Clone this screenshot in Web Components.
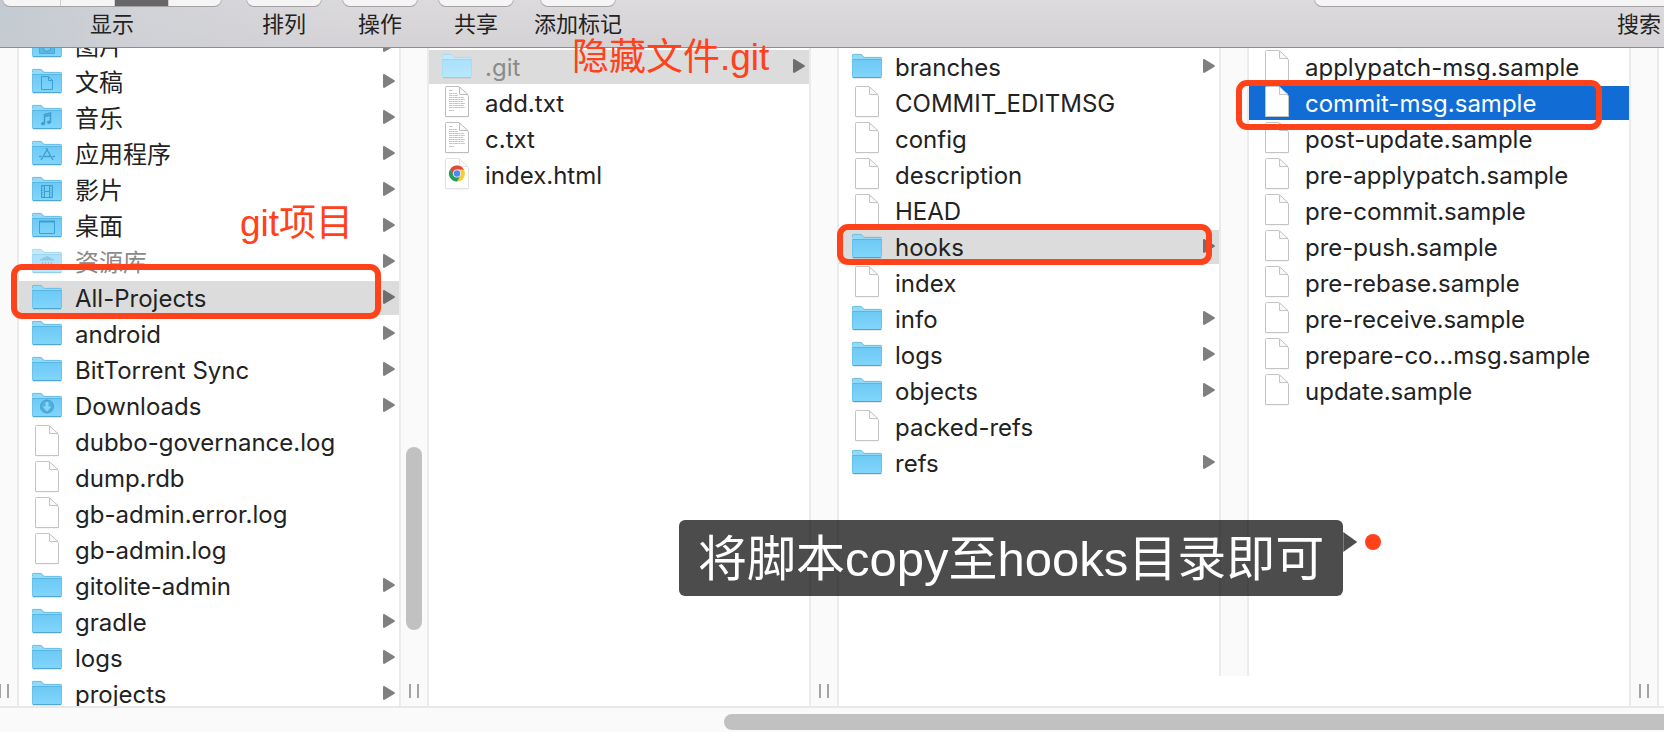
<!DOCTYPE html>
<html lang="zh-CN">
<head>
<meta charset="utf-8">
<title>Finder</title>
<style>
  body {
    margin: 0;
    height: 100vh;
    overflow: hidden;
    background: #fff;
    color: #222;
    font-family: Inter, "Noto Sans CJK SC", sans-serif;
  }
</style>
</head>
<body>
<finder-window>
  <tool-group slot="tools" label="显示" segments="4" active="3"></tool-group>
  <tool-group slot="tools" label="排列" segments="1"></tool-group>
  <tool-group slot="tools" label="操作" segments="1"></tool-group>
  <tool-group slot="tools" label="共享" segments="1"></tool-group>
  <tool-group slot="tools" label="添加标记" segments="1"></tool-group>
  <search-field slot="search" label="搜索"></search-field>

  <column-divider first grip></column-divider>
  <finder-column scrolled>
    <finder-row icon="pictures" folder>图片</finder-row>
    <finder-row icon="documents" folder>文稿</finder-row>
    <finder-row icon="music" folder>音乐</finder-row>
    <finder-row icon="apps" folder>应用程序</finder-row>
    <finder-row icon="movies" folder>影片</finder-row>
    <finder-row icon="desktop" folder>桌面</finder-row>
    <finder-row icon="library" folder dimmed>资源库</finder-row>
    <finder-row icon="folder" folder open>All-Projects</finder-row>
    <finder-row icon="folder" folder>android</finder-row>
    <finder-row icon="folder" folder>BitTorrent Sync</finder-row>
    <finder-row icon="downloads" folder>Downloads</finder-row>
    <finder-row icon="file">dubbo-governance.log</finder-row>
    <finder-row icon="file">dump.rdb</finder-row>
    <finder-row icon="file">gb-admin.error.log</finder-row>
    <finder-row icon="file">gb-admin.log</finder-row>
    <finder-row icon="folder" folder>gitolite-admin</finder-row>
    <finder-row icon="folder" folder>gradle</finder-row>
    <finder-row icon="folder" folder>logs</finder-row>
    <finder-row icon="folder" folder>projects</finder-row>
  </finder-column>
  <column-divider grip thumb></column-divider>
  <finder-column>
    <finder-row icon="folder" folder open dimmed>.git</finder-row>
    <finder-row icon="text">add.txt</finder-row>
    <finder-row icon="text">c.txt</finder-row>
    <finder-row icon="chrome">index.html</finder-row>
  </finder-column>
  <column-divider grip></column-divider>
  <finder-column>
    <finder-row icon="folder" folder>branches</finder-row>
    <finder-row icon="file">COMMIT_EDITMSG</finder-row>
    <finder-row icon="file">config</finder-row>
    <finder-row icon="file">description</finder-row>
    <finder-row icon="file">HEAD</finder-row>
    <finder-row icon="folder" folder open>hooks</finder-row>
    <finder-row icon="file">index</finder-row>
    <finder-row icon="folder" folder>info</finder-row>
    <finder-row icon="folder" folder>logs</finder-row>
    <finder-row icon="folder" folder>objects</finder-row>
    <finder-row icon="file">packed-refs</finder-row>
    <finder-row icon="folder" folder>refs</finder-row>
  </finder-column>
  <column-divider short></column-divider>
  <finder-column>
    <finder-row icon="file">applypatch-msg.sample</finder-row>
    <finder-row icon="file" selected>commit-msg.sample</finder-row>
    <finder-row icon="file">post-update.sample</finder-row>
    <finder-row icon="file">pre-applypatch.sample</finder-row>
    <finder-row icon="file">pre-commit.sample</finder-row>
    <finder-row icon="file">pre-push.sample</finder-row>
    <finder-row icon="file">pre-rebase.sample</finder-row>
    <finder-row icon="file">pre-receive.sample</finder-row>
    <finder-row icon="file">prepare-co…msg.sample</finder-row>
    <finder-row icon="file">update.sample</finder-row>
  </finder-column>
  <column-divider grip></column-divider>

  <mark-box slot="marks" style="left: 11px; top: 264px; width: 370px; height: 55px"></mark-box>
  <mark-box slot="marks" style="left: 837px; top: 224px; width: 375px; height: 41px"></mark-box>
  <mark-box slot="marks" style="left: 1236px; top: 80px; width: 366px; height: 50px"></mark-box>
  <mark-text slot="marks" style="left: 572px; top: 36px">隐藏文件.git</mark-text>
  <mark-text slot="marks" style="left: 240px; top: 202px">git项目</mark-text>
  <mark-callout slot="marks" style="left: 679px; top: 520px">将脚本copy至hooks目录即可</mark-callout>
</finder-window>

<script>
const template = (strings, ...values) => {
  const el = document.createElement('template')
  el.innerHTML = String.raw(strings, ...values)
  return el
}

class Base extends HTMLElement {
  constructor() {
    super()
    this.attachShadow({ mode: 'open' }).appendChild(
      this.constructor.template.content.cloneNode(true),
    )
  }

  $(selector) {
    return this.shadowRoot.querySelector(selector)
  }
}

class FinderWindow extends Base {
  static template = template`
    <header>
      <div class="tools"><slot name="tools"></slot></div>
      <slot name="search"></slot>
    </header>
    <main><slot></slot></main>
    <footer><div class="thumb"></div></footer>
    <slot name="marks"></slot>
    <style>
      :host {
        display: flex;
        flex-direction: column;
        height: 100%;
        position: relative;
        overflow: hidden;
      }
      header {
        flex: none;
        box-sizing: border-box;
        height: 48px;
        display: flex;
        align-items: flex-end;
        justify-content: space-between;
        padding: 0 0 10px 2px;
        overflow: hidden;
        border-bottom: 1px solid #8f8d90;
        background:
          linear-gradient(100deg, #c3cad1 0, rgba(205, 208, 213, 0.7) 140px, rgba(216, 214, 217, 0) 360px),
          linear-gradient(#dcdadd, #d4d2d5);
      }
      .tools {
        display: flex;
        align-items: flex-end;
        gap: 20px;
      }
      main {
        flex: 1;
        min-height: 0;
        display: flex;
        margin-left: -11px;
        margin-right: 5px;
      }
      footer {
        flex: none;
        box-sizing: border-box;
        height: 26px;
        padding-top: 6px;
        display: flex;
        justify-content: flex-end;
        border-top: 2px solid #e8e8e8;
        background: #fafafa;
      }
      .thumb {
        width: 940px;
        height: 16px;
        border-radius: 8px 0 0 8px;
        background: #c1c1c1;
      }
    </style>`
}

class ToolGroup extends Base {
  static template = template`
    <div class="buttons"></div>
    <span class="label" id="label"></span>
    <style>
      :host {
        display: flex;
        flex-direction: column;
        align-items: center;
        gap: 4px;
      }
      :host([segments="4"]) { margin-right: 4px; }
      .buttons {
        display: flex;
        box-sizing: border-box;
        height: 44px;
        border-radius: 8px;
        overflow: hidden;
        border: 1px solid #b9b7ba;
        border-bottom-color: #a3a1a4;
        background: #f5f5f5;
      }
      button {
        width: 54px;
        padding: 0;
        border: 0;
        border-right: 1px solid #cfcfcf;
        background: none;
      }
      button.active { background: #676767; }
      button:first-child { width: 58px; }
      button:last-child { border-right: 0; width: 52px; }
      button:only-child { width: 74px; }
      .label {
        font-size: 22px;
        line-height: 26px;
      }
    </style>`

  connectedCallback() {
    const label = this.getAttribute('label')
    const active = Number(this.getAttribute('active'))
    this.$('.label').textContent = label
    for (let i = 1; i <= Number(this.getAttribute('segments')); i++) {
      const button = document.createElement('button')
      button.setAttribute('aria-labelledby', 'label')
      button.classList.toggle('active', i === active)
      this.$('.buttons').append(button)
    }
  }
}

class SearchField extends Base {
  static template = template`
    <input id="search" type="search">
    <label for="search"></label>
    <style>
      :host {
        display: flex;
        flex-direction: column;
        align-items: flex-end;
        gap: 4px;
      }
      input {
        box-sizing: border-box;
        width: 350px;
        height: 44px;
        border: 1px solid #b9b7ba;
        border-bottom-color: #a3a1a4;
        border-right: 0;
        border-radius: 8px 0 0 8px;
        background: #f5f5f5;
        outline: none;
      }
      label {
        padding-right: 3px;
        font-size: 22px;
        line-height: 26px;
      }
    </style>`

  connectedCallback() {
    this.$('label').textContent = this.getAttribute('label')
  }
}

class ColumnDivider extends Base {
  static template = template`
    <div class="thumb"></div>
    <div class="grip"></div>
    <style>
      :host {
        flex: none;
        box-sizing: border-box;
        width: 30px;
        padding: 0 8px 8px;
        display: flex;
        flex-direction: column;
        justify-content: flex-end;
        border: solid #ebebeb;
        border-width: 0 2px;
        background: #fafafa;
      }
      :host([short]) { margin-bottom: 30px; }
      .thumb {
        display: none;
        width: 16px;
        height: 183px;
        margin: 0 -2px 54px;
        border-radius: 8px;
        background: #c1c1c1;
        align-self: center;
      }
      :host([thumb]) .thumb { display: block; }
      .grip {
        display: none;
        box-sizing: border-box;
        width: 10px;
        height: 14px;
        border: solid #a3a3a3;
        border-width: 0 2px;
      }
      :host([grip]) .grip { display: block; }
    </style>`
}

class FinderColumn extends Base {
  static template = template`
    <div class="list" role="list"><slot></slot></div>
    <style>
      :host {
        flex: 1 1 0;
        min-width: 0;
        overflow: hidden;
        background: #fff;
      }
      .list {
        display: flex;
        flex-direction: column;
        gap: 2px;
        padding-top: 2px;
      }
      :host([scrolled]) .list { margin-top: -21px; }
    </style>`
}

class FinderRow extends Base {
  static template = template`
    <button>
      <file-icon></file-icon>
      <span><slot></slot></span>
      <svg class="arrow" width="12" height="14" viewBox="0 0 12 14"><path d="M0 1.2C0 .2.8-.2 1.6.2L11.5 6.2Q12.4 7 11.5 7.8L1.6 13.8C.8 14.2 0 13.8 0 12.8z"/></svg>
    </button>
    <style>
      :host { display: block; }
      button {
        box-sizing: border-box;
        width: 100%;
        height: 34px;
        padding: 0 4px 0 13px;
        display: flex;
        gap: 13px;
        border: 0;
        background: none;
        color: inherit;
        font: inherit;
        font-size: 24px;
        line-height: 36px;
        text-align: left;
      }
      span {
        flex: 1;
        min-width: 0;
        white-space: nowrap;
      }
      .arrow {
        display: none;
        flex: none;
        margin-top: 9px;
        fill: #7f7f7f;
      }
      :host([folder]) .arrow { display: block; }
      :host([open]) button { background: #dcdcdc; }
      :host([open]) .arrow { fill: #6e6e6e; }
      :host([selected]) button { background: #116cd6; color: #fff; }
      :host([dimmed]) span { color: #8a8a8a; }
      /* keeps hidden folders pale on the grey highlight too */
      :host([dimmed]) file-icon { filter: contrast(0.4) brightness(1.43); }
    </style>`

  connectedCallback() {
    this.setAttribute('role', 'listitem')
    this.$('file-icon').setAttribute('kind', this.getAttribute('icon'))
  }
}

const folder = (glyph = '') => `
  <path fill="#000" opacity=".12" d="M1 27h28v1.8H1z"/>
  <path fill="#93daf9" d="M0 5.5Q0 4 1.5 4h7q1 0 1.8 1l1 1.2q.6.8 1.6.8h15.6Q30 7 30 8.5V12H0z"/>
  <path fill="none" stroke="#62b5dc" stroke-width=".8" d="M.4 7V5.4q0-1 1-1h7q.9 0 1.6.9l1 1.2q.7.9 1.8.9h15.7q1 0 1 1"/>
  <path fill="url(#f)" d="M0 9h30v17.5q0 1.5-1.5 1.5h-27Q0 28 0 26.5z"/>
  <path stroke="#58b6e4" d="M0 9.5h30"/>
  <path stroke="#4ca5d2" d="M1 27.5h28"/>
  <path stroke="#67bde6" stroke-width=".8" d="M.4 9v17.5M29.6 9v17.5"/>
  <g fill="none" stroke="#3d9fd0" stroke-width="1">${glyph}</g>`

const page = (body = '', stroke = '#c4c4c4') => `
  <path fill="#000" opacity=".18" d="M4 30.2h22v1H4z"/>
  <path fill="#fff" stroke="${stroke}" d="M4.500 .5H17l9.500 9.500V30.500h-23V1.500q0-1 1-1z"/>
  <path fill="#fafafa" stroke="${stroke}" d="M17.500 1v7.500h8.500z"/>${body}`

const textLines = [4, 7, 9, 11, 13, 15, 17, 19, 21, 24]
  .map((y, i) => `<path stroke="#bcbcbc" stroke-width=".9" stroke-dasharray="3 .5 2 .4" d="M7 ${y + 0.5}h${[4, 8, 9, 15, 16, 14, 16, 15, 16, 5][i]}"/>`)
  .join('')

const icons = {
  folder: folder(),
  pictures: folder('<path fill="#5bb9e6" stroke="#4aaad9" d="M7.500 13.500H11l1.500-2h5l1.500 2h3.500v11h-15z"/><circle cx="15" cy="18.500" r="4" fill="#74cbf3"/>'),
  documents: folder('<path d="M9.500 11.500h7l4 4v9h-11zM16.500 11.500v4h4"/>'),
  music: folder('<path stroke-width="1.500" d="M12.500 22.500v-9l6-1.500v9M12.500 15.500l6-1.500"/><g fill="#3d9fd0"><ellipse cx="11" cy="22.700" rx="1.600" ry="1.200"/><ellipse cx="17" cy="21.200" rx="1.600" ry="1.200"/></g>'),
  apps: folder('<path stroke-width="1.400" d="M14 11l7 12M15.800 11.500L9 23M7 19.500h2.500M12 19.500h6M20.500 19.500H23"/>'),
  movies: folder('<path d="M9.500 12.500h11v12h-11zM12.500 12.500v12M17.500 12.500v12M12.500 18.500h5"/><path stroke-dasharray="1 1" d="M11 13v11M19 13v11"/>'),
  desktop: folder('<path d="M7.500 12.500h15v12h-15z"/><path stroke-width="2" d="M7 12.500h16"/>'),
  library: folder('<path fill="#3d9fd0" stroke="none" d="M15 11l7 3.500v1H8v-1z"/><path stroke-width="1.500" d="M10.500 17v6M13.500 17v6M16.500 17v6M19.500 17v6M8 24h14"/>'),
  downloads: folder('<circle cx="15" cy="17.500" r="6.500" fill="#4fafde"/><path fill="#8bd6f8" stroke="none" d="M13.500 13h3v4.500h3L15 22.500l-4.500-5h3z"/>'),
  file: page(),
  text: page(textLines, '#bdbdbd'),
  chrome: page(`
    <circle cx="15" cy="15.500" r="8" fill="#fbc934"/>
    <path fill="#dd4b3e" d="M8.070 11.500A8 8 0 0 1 21.930 11.500H15L11.540 17.500z"/>
    <path fill="#1ba15f" d="M8.070 11.500A8 8 0 0 0 15 23.500L18.460 17.500H11.540z"/>
    <circle cx="15" cy="15.500" r="4" fill="#f4f4f4"/>
    <circle cx="15" cy="15.500" r="3.200" fill="#4a8af4"/>`, '#e2e2e2'),
}

class FileIcon extends Base {
  static template = template`
    <svg width="30" height="32" viewBox="0 0 30 32" aria-hidden="true">
      <defs>
        <linearGradient id="f" x1="0" y1="0" x2="0" y2="1">
          <stop offset="0" stop-color="#6cc9f5"/>
          <stop offset="1" stop-color="#82d6fb"/>
        </linearGradient>
      </defs>
      <g></g>
    </svg>
    <style>
      :host { display: block; flex: none; width: 30px; height: 32px; }
      svg { display: block; }
    </style>`

  static observedAttributes = ['kind']

  attributeChangedCallback(name, oldValue, kind) {
    this.$('svg > g').innerHTML = icons[kind] || ''
  }
}

class MarkBox extends Base {
  static template = template`
    <style>
      :host {
        position: absolute;
        box-sizing: border-box;
        border: 6px solid #ff421a;
        border-radius: 11px;
        pointer-events: none;
      }
    </style>`
}

class MarkText extends Base {
  static template = template`
    <slot></slot>
    <style>
      :host {
        position: absolute;
        color: #ff421a;
        font: 37px/44px "Liberation Sans", "Noto Sans CJK SC", sans-serif;
        white-space: nowrap;
      }
    </style>`
}

class MarkCallout extends Base {
  static template = template`
    <div class="bubble"><slot></slot></div>
    <div class="tip"></div>
    <div class="dot"></div>
    <style>
      :host {
        position: absolute;
        display: flex;
        color: #fff;
        font: 49px/78px "Liberation Sans", "Noto Sans CJK SC", sans-serif;
        white-space: nowrap;
      }
      .bubble {
        height: 76px;
        padding: 0 19px;
        border-radius: 6px;
        background: rgba(0, 0, 0, 0.7);
      }
      .tip {
        margin-top: 12px;
        width: 14px;
        height: 20px;
        background: rgba(0, 0, 0, 0.7);
        clip-path: polygon(0 0, 100% 50%, 0 100%);
      }
      .dot {
        margin: 14px 0 0 8px;
        width: 16px;
        height: 16px;
        border-radius: 50%;
        background: #ff421a;
      }
    </style>`
}

customElements.define('file-icon', FileIcon)
customElements.define('finder-row', FinderRow)
customElements.define('finder-column', FinderColumn)
customElements.define('column-divider', ColumnDivider)
customElements.define('tool-group', ToolGroup)
customElements.define('search-field', SearchField)
customElements.define('mark-box', MarkBox)
customElements.define('mark-text', MarkText)
customElements.define('mark-callout', MarkCallout)
customElements.define('finder-window', FinderWindow)
</script>
</body>
</html>
